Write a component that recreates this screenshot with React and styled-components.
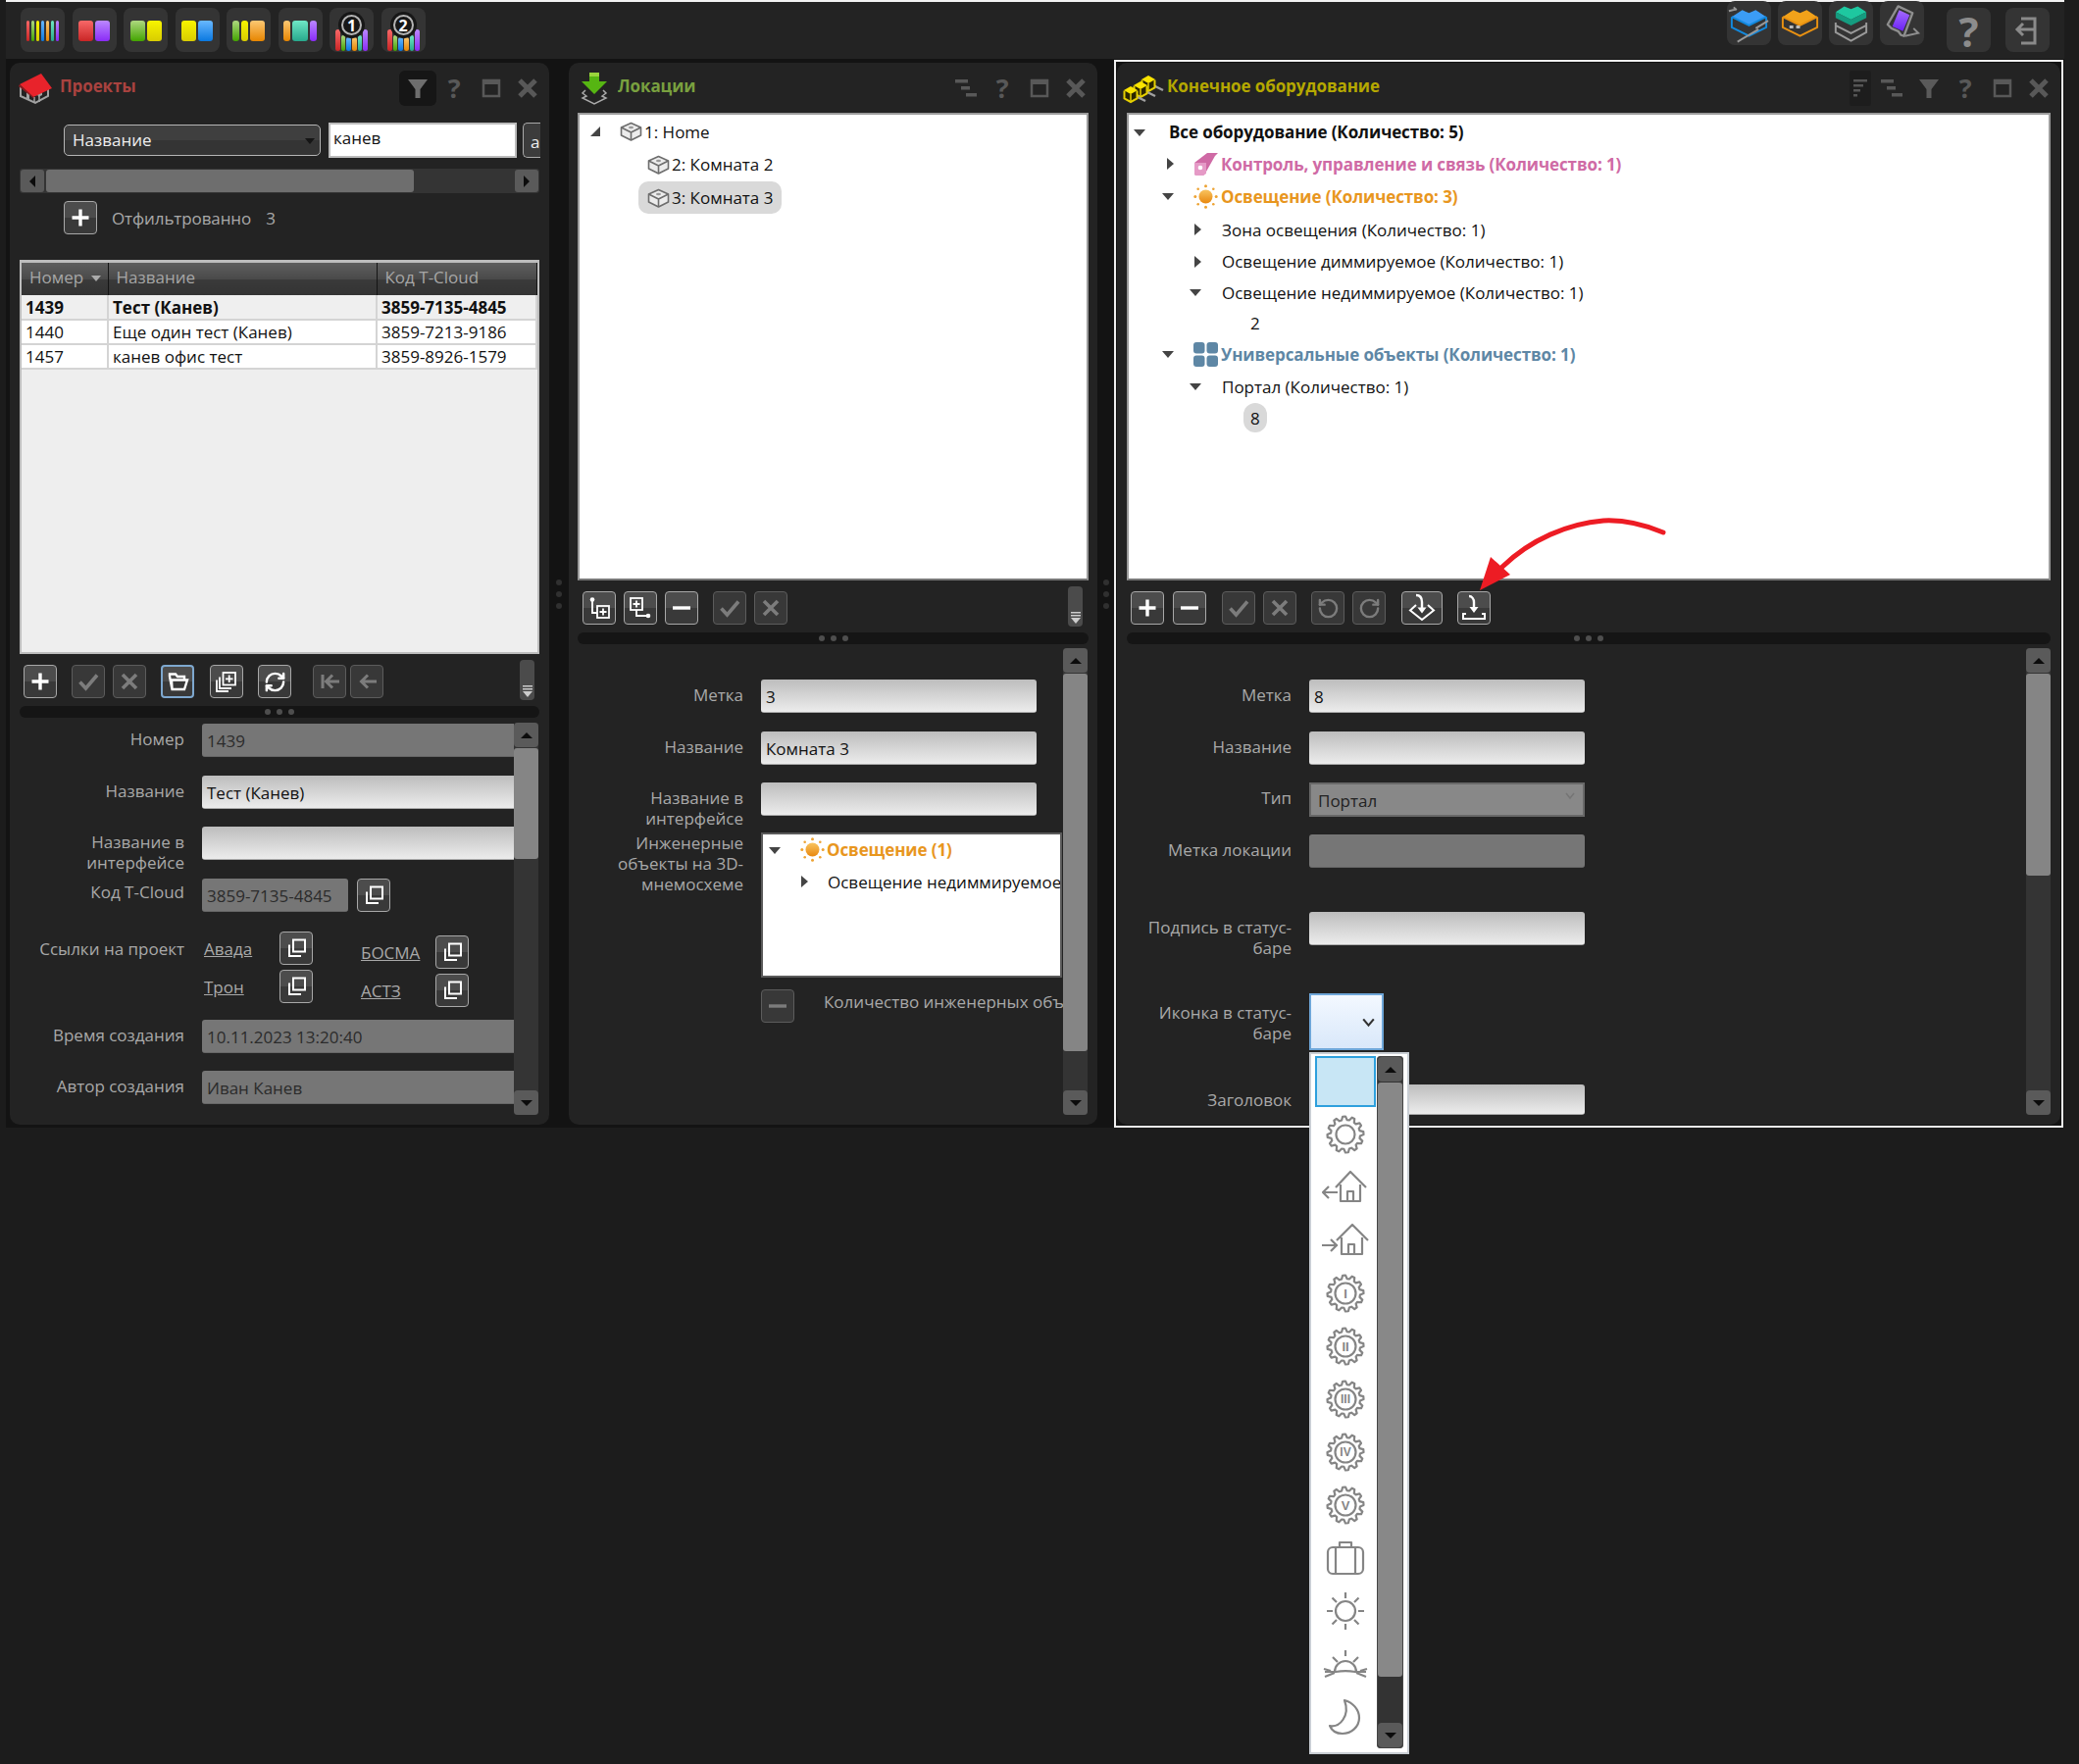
import React from 'react';
import styled, { createGlobalStyle } from 'styled-components';
import { RefreshCw, RotateCcw, RotateCw } from 'lucide-react';

const Global = createGlobalStyle`
  html, body { margin: 0; padding: 0; background: #1c1c1c; }
  body { font-family: "Open Sans", "Noto Sans", sans-serif; font-size: 17px; }
  * { box-sizing: border-box; }
`;

const Page = styled.div`
  width: 2120px; height: 1799px; background: #1c1c1c; overflow: hidden;
`;
const TopBar = styled.div`
  width: 2099px; height: 60px; margin-left: 6px; background: #232323;
  border-top: 2px solid #f2f2f2; display: flex; align-items: flex-start; position: relative;
`;
const LeftTools = styled.div`
  display: flex; gap: 7.5px; margin: 6px 0 0 15px;
`;
const RightTools = styled.div`
  display: flex; margin-left: auto; margin-right: 15px; margin-top: -1px; gap: 7px;
`;
const ToolTile = styled.div`
  width: 45px; height: 45px; border-radius: 8px; background: #343434; position: relative;
  display: flex; align-items: center; justify-content: center; gap: 2px;
  padding-top: 1px;
`;
const RightTile = styled(ToolTile)`
  margin-left: ${p => p.$ml || 0}px; margin-top: ${p => p.$mt || 0}px;
  color: #8c8c8c; font-weight: 700; font-size: 42px; line-height: 45px;
`;
const SwatchBar = styled.div`
  width: ${p => p.$w}px; height: ${p => p.$h || 21}px; border-radius: 3px;
  background: linear-gradient(${p => p.$a}, ${p => p.$b});
  align-self: ${p => (p.$h ? 'flex-end' : 'center')};
`;
const ArchBars = styled.div`
  height: 34px; display: flex; gap: 1px; align-items: flex-end; margin-top: 8px;
`;
const NumBadge = styled.div`
  position: absolute; left: 9px; top: 4px; width: 27px; height: 27px; border-radius: 50%;
  background: #171717; display: flex; align-items: center; justify-content: center;
  &::after {
    content: ''; position: absolute; inset: 3px; border: 2px solid #b5b5b5; border-radius: 50%;
  }
  font-size: 16px; font-weight: 700; color: #fff; line-height: 1;
`;

const Workspace = styled.div`
  width: 2099px; height: 1090px; margin-left: 6px; background: #131313;
  display: flex; align-items: flex-start; padding: 4px 0 0 4px;
`;
const Gutter = styled.div`
  width: ${p => p.$w}px; height: 1083px; display: flex; flex-direction: column;
  align-items: center; justify-content: center; gap: 6px;
`;
const GutterDot = styled.span`
  width: 6px; height: 6px; border-radius: 50%; background: #303030;
`;
const Panel = styled.div`
  position: relative; width: ${p => p.$w}px; height: 1083px; background: #232323;
  border-radius: 10px; display: flex; flex-direction: column; padding: 0 ${p => p.$px || 10}px 10px;
`;
const PanelFrame = styled.div`
  border: 2px solid #f0f0f0; padding: 1px; margin-top: -3px; position: relative;
`;
const PanelHeader = styled.div`
  height: 51px; flex: none; display: flex; align-items: center;
  margin: 0 ${p => -(p.$px || 10) + 3}px 0 ${p => p.$ml || 0}px;
`;
const Title = styled.div`
  font-weight: 700; font-size: 17px; letter-spacing: -0.1px; color: ${p => p.$c}; margin-left: ${p => p.$gap}px; margin-bottom: 4px;
`;
const HeaderIcons = styled.div`
  margin-left: auto; display: flex; height: 36px; align-self: center;
`;
const HeaderSlot = styled.div`
  width: 37.5px; height: 36px; display: flex; align-items: center; justify-content: center;
  color: #585858; font-size: 27px; font-weight: 700; line-height: 1;
  background: ${p => (p.$active ? '#161616' : 'transparent')}; border-radius: 6px;
`;
const ListBox = styled.div`
  width: 22px; height: 36px; margin-left: 11px; background: #1d1d1d; border-radius: 3px;
  display: flex; align-items: center; justify-content: center;
`;

const FilterRow = styled.div`
  display: flex; align-items: center; margin: 10px 0 0 45px; height: 36px; gap: 8px; overflow: hidden; width: 486px;
`;
const DarkSelect = styled.div`
  width: 262px; height: 32px; border: 1.5px solid #b5b5b5; border-radius: 5px;
  background: linear-gradient(#3f3f3f 50%, #343434 50%); color: #eee; padding: 0 0 2px 8px;
  display: flex; align-items: center; justify-content: space-between; line-height: 1;
  &::after {
    content: ''; border: 5px solid transparent; border-top: 6px solid #151515; border-bottom: 0; margin-right: 5px; margin-top: 3px;
  }
`;
const SearchInput = styled.div`
  width: 192px; height: 36px; background: #fff; border: 2px solid #bcbcbc; color: #111;
  padding: 1px 0 0 3px; line-height: 26px;
`;
const CutButton = styled.div`
  width: 18px; height: 36px; flex: none; border: 1.5px solid #a9a9a9; border-right: 0; border-radius: 5px 0 0 5px;
  margin-left: -2px; background: #3c3c3c; color: #eee; padding: 6px 0 0 7px; line-height: 26px; overflow: hidden;
`;
const HScroll = styled.div`
  margin-top: 11px; height: 25px; width: 530px; display: flex; background: #343434; border-radius: 3px; padding: 1px;
`;
const HBtn = styled.div`
  width: 24px; height: 23px; flex: none; background: #5a5a5a; border-radius: 3px; display: flex; align-items: center; justify-content: center;
  &::after {
    content: ''; border: 6px solid transparent;
    ${p => (p.$dir === 'l' ? 'border-right: 6px solid #0c0c0c; border-left: 0;' : 'border-left: 6px solid #0c0c0c; border-right: 0;')}
  }
`;
const HThumb = styled.div`
  width: 375px; height: 23px; margin-left: 2px; background: #6e6e6e; border-radius: 3px;
`;
const HSpace = styled.div`flex: 1;`;
const AddRow = styled.div`
  margin: 8px 0 0 45px; height: 34px; display: flex; align-items: center; color: #a9a9a9; font-size: 17px; letter-spacing: -0.1px;
`;
const AddText = styled.span`margin-left: ${p => p.$ml}px; margin-top: 1px;`;

const TableBox = styled.div`
  margin-top: 26px; height: 402px; width: 530px; border: 2px solid #bdbdbd; border-top-width: 3px; background: #eee; flex: none;
`;
const Grid = styled.table`
  border-collapse: collapse; table-layout: fixed; width: 100%; font-size: 17px; color: #111;
`;
const Th = styled.th`
  width: ${p => p.$w}px; height: 33px; padding: 0 0 5px 8px; font-weight: 400; text-align: left; color: #a6a6a6;
  background: linear-gradient(#5e5e5e, #4a4a4a 50%, #3a3a3a 52%, #333);
  border-right: 1px solid #151515; line-height: 1;
`;
const SortMark = styled.span`
  display: inline-block; margin-left: 8px; vertical-align: 2px;
  border: 5px solid transparent; border-top: 6px solid #aaa; border-bottom: 0;
`;
const Td = styled.td`
  height: 25px; padding: 0 0 0 4px; line-height: 1; background: ${p => (p.$sel ? '#efefef' : '#fff')};
  font-weight: ${p => (p.$sel ? 700 : 400)};
  border-right: 2px solid #d4d4d4; border-bottom: 2px solid #d4d4d4; white-space: nowrap;
`;

const TreeBox = styled.div`
  height: 477px; flex: none; background: #fff; border: 2px solid #9c9c9c; border-bottom-color: #777; padding-top: 1px; color: #111; font-size: 17px;
`;
const TreeRow = styled.div`
  height: ${p => p.$h || 32}px; display: flex; align-items: center; padding-left: ${p => p.$pl}px; white-space: nowrap;
`;
const Caret = styled.svg`
  width: 12px; height: 12px; flex: none; margin-right: ${p => p.$mr}px; fill: #444;
`;
const NodeText = styled.span`
  color: ${p => p.$c || '#111'}; font-weight: ${p => (p.$bold ? 700 : 400)}; line-height: 1;
  letter-spacing: ${p => (p.$bold ? '-0.1px' : '0')}; margin-left: ${p => p.$ml || 0}px;
`;
const Pill = styled.span`
  background: #d9d9d9; border-radius: ${p => p.$r}px; display: inline-flex; align-items: center;
  height: ${p => p.$hh}px; padding: 0 ${p => p.$px}px; margin-left: ${p => p.$ml || 0}px;
`;

const Toolbar = styled.div`
  height: 41px; flex: none; margin-top: 6px; display: flex; align-items: flex-start; padding: 5px ${p => p.$pr || 5}px 0 ${p => p.$pl}px;
`;
const ToolBtn = styled.div`
  width: ${p => p.$w || 34}px; height: 34px; flex: none; margin-left: ${p => p.$ml || 0}px; border-radius: 4px;
  border: ${p => (p.$on ? '2px' : '1.5px')} solid ${p => (p.$off ? '#5c5c5c' : p.$on ? '#7ea8cf' : '#a8a8a8')};
  background: ${p => (p.$off ? '#383838' : 'linear-gradient(#4c4c4c 50%, #393939 50%)')};
  color: ${p => (p.$off ? '#7c7c7c' : '#fff')};
  display: flex; align-items: center; justify-content: center;
`;
const Handle = styled.div`
  width: 15px; height: 41px; margin-left: auto; margin-top: -5px; border-radius: 4px; background: #4b4b4b;
  display: flex; align-items: flex-end; justify-content: center; padding-bottom: 2px;
`;
const HSplit = styled.div`
  height: 12px; flex: none; margin-top: 6px; background: #151515; border-radius: 6px;
  display: flex; align-items: center; justify-content: center; gap: 6px;
`;
const SplitDot = styled.span`
  width: 6px; height: 6px; border-radius: 50%; background: #4e4e4e;
`;
const FormArea = styled.div`
  flex: 1; min-height: 0; margin-top: ${p => p.$mt}px; margin-right: ${p => p.$mr || 0}px; display: flex;
`;
const FormBody = styled.div`
  flex: 1; min-width: 0; overflow: hidden; padding-top: ${p => p.$pt}px; padding-left: ${p => p.$pl || 0}px;
`;
const Row = styled.div`
  height: ${p => p.$h || 52.5}px; display: grid; grid-template-columns: 168px 1fr; column-gap: 18px; align-items: start;
`;
const Label = styled.div`
  text-align: right; color: #a9a9a9; font-size: 17px; line-height: 21px; padding-top: ${p => p.$pt ?? 5}px;
`;
const Field = styled.div`
  width: ${p => p.$w}px; height: ${p => p.$h || 34}px; border-radius: 3px; padding-left: 5px; line-height: 35px; font-size: 17px;
  color: ${p => (p.$off ? '#2b2b2b' : '#111')};
  background: ${p => (p.$off ? '#767676' : 'linear-gradient(#bdbdbd, #ececec)')};
  border-bottom: 1px solid ${p => (p.$off ? '#666' : '#aaa')};
`;
const FieldLine = styled.div`display: flex; gap: 9px;`;
const LinksGrid = styled.div`
  display: grid; grid-template-columns: 160px 112px; position: relative; padding-left: 2px;
`;
const LinkCol = styled.div`
  margin-top: ${p => p.$mt || 0}px; display: flex; flex-direction: column; gap: 5px;
`;
const LinkRow = styled.div`
  display: flex; justify-content: space-between; align-items: flex-start; width: ${p => p.$w}px;
`;
const ProjectLink = styled.a`
  color: #a9a9a9; text-decoration: underline; font-size: 17px; line-height: 36px; height: 34px;
`;
const VScroll = styled.div`
  width: 25px; flex: none; background: #343434; display: flex; flex-direction: column; border-radius: 3px;
`;
const VBtn = styled.div`
  height: 25px; flex: none; background: #5a5a5a; border-radius: 4px; display: flex; align-items: center; justify-content: center;
  &::after {
    content: ''; border: 6px solid transparent;
    ${p => (p.$dir === 'u' ? 'border-bottom: 6px solid #0c0c0c; border-top: 0;' : 'border-top: 6px solid #0c0c0c; border-bottom: 0;')}
  }
`;
const VThumb = styled.div`
  height: ${p => p.$h}px; flex: none; background: #858585; border-radius: 3px; margin-top: 1px;
`;
const VSpace = styled.div`flex: 1;`;
const SubTree = styled.div`
  width: 307px; height: 148px; background: #fff; border: 2px solid #5a5a5a; overflow: hidden; font-size: 17px;
`;
const SubTreeRow = styled(TreeRow)`
  height: ${p => p.$h}px;
`;
const CountRow = styled.div`
  display: flex; align-items: flex-start; white-space: nowrap;
`;
const CountText = styled.span`
  color: #a9a9a9; margin-left: 30px; margin-top: 1px; line-height: 24px;
`;
const TypeSelect = styled.div`
  width: 281px; height: 35px; background: #888; border: 2px solid #686868; color: #222; padding-left: 7px; line-height: 33px;
  display: flex; justify-content: space-between;
`;
const TinyChevron = styled.svg`
  width: 12px; height: 12px; margin: 6px 7px 0 0; stroke: #757575; fill: none; stroke-width: 1.5;
`;
const IconSelect = styled.div`
  width: 76px; height: 58px; background: linear-gradient(#f3f8ff, #d9e8fa); border: 2px solid #6ea6d8;
  display: flex; align-items: center; justify-content: flex-end; padding-right: 5px; position: relative;
`;
const DarkChevron = styled.svg`
  width: 17px; height: 17px; stroke: #333; fill: none; stroke-width: 2;
`;
const Dropdown = styled.div`
  position: absolute; left: 196px; top: 1009px; width: 102px; height: 716px; z-index: 5;
  background: #fff; border: 2px solid #c9ced4; padding: 2px 4px; display: flex; gap: 1px;
`;
const DropList = styled.div`
  width: 62px; flex: none; display: flex; flex-direction: column; align-items: center;
`;
const DropSelected = styled.div`
  width: 62px; height: 52px; flex: none; margin-bottom: 1px; background: #c8e6f5; border: 2px solid #2ea0dd;
`;
const DropItem = styled.div`
  height: 54px; flex: none; width: 62px; display: flex; align-items: center; justify-content: center;
`;
const DropScroll = styled.div`
  width: 27px; height: 706px; flex: none; background: #333; border: 1px solid #444; border-radius: 3px; display: flex; flex-direction: column;
`;
const DropBtn = styled(VBtn)`height: 25px;`;
const DropThumb = styled(VThumb)`
  height: 606px; background: #888; margin-top: 1px;
`;
const ArrowMark = styled.svg`
  position: absolute; left: 360px; top: 404px; width: 200px; height: 145px; z-index: 4; pointer-events: none;
`;

/* ---------- drawn icons ---------- */
const I = ({ size = 24, sw = 2, children, vb = '0 0 24 24' }) => (
  <svg width={size} height={size} viewBox={vb} fill="none" stroke="currentColor" strokeWidth={sw} strokeLinecap="butt" strokeLinejoin="miter">{children}</svg>
);
const PlusI = () => <I sw={3.4}><path d="M12 3.5v17M3.5 12h17" /></I>;
const MinusI = () => <I sw={3.4}><path d="M3 12h18" /></I>;
const CheckI = () => <I sw={3.6}><path d="M3.5 12.5l6 6.5L21 5.5" /></I>;
const CrossI = () => <I sw={3.6}><path d="M5 5l14 14M19 5L5 19" /></I>;
const FolderI = () => <I sw={2.4}><path d="M4 7V4.5h6l2 2.500h7v3.500M4 7l2.500 13H19l3-9.500H6L6.500 20" /></I>;
const CopyPlusI = () => <I sw={1.8}><rect x="8.5" y="3" width="12.5" height="12.5" /><path d="M14.700 5.500v7.500M11 9.300h7.500M5 7.500V19h12M2 10.500V22h12" /></I>;
const FirstI = () => <I sw={3}><path d="M5 5v14M22 12H9M15 5.500l-6.500 6.500 6.500 6.500" /></I>;
const BackI = () => <I sw={3}><path d="M22 12H7M13 5.500L6.500 12l6.500 6.500" /></I>;
const CopyI = () => <I sw={2}><rect x="9" y="3.5" width="12" height="12" /><path d="M5 8.500V20h12" /></I>;
const TreeChildI = () => (
  <I sw={1.8}><circle cx="5" cy="3.5" r="2.3" fill="currentColor" stroke="none" /><path d="M5 4v13h5" /><rect x="10" y="10" width="12" height="12" /><path d="M16 12.500v7M12.500 16h7" /></I>
);
const TreeSiblingI = () => (
  <I sw={1.8}><rect x="2" y="2" width="12" height="12" /><path d="M8 4.500v7M4.500 8h7M8 14v6h10" /><circle cx="20" cy="20" r="2.3" fill="currentColor" stroke="none" /></I>
);
const DropDiamondI = () => (
  <I size={30} vb="0 0 30 30" sw={2}><path d="M9 2c4 0 6 3 6 7v9" strokeWidth="2.4" /><path d="M10.500 14.500h9L15 20.500z" fill="currentColor" stroke="none" /><path d="M9 12L3 17.500 15 27l12-9.500L21 12" /></I>
);
const DropTrayI = () => (
  <I size={28} vb="0 0 28 28" sw={2}><path d="M9 2c3 0 5 3 5 6v8" strokeWidth="2.4" /><path d="M9.500 13h9L14 19z" fill="currentColor" stroke="none" /><path d="M6 20H3v5h22v-5h-3" /></I>
);
const HandleMark = () => (
  <svg width="12" height="13" viewBox="0 0 12 13" fill="#ccc"><rect x="1" y="0" width="10" height="1.5" /><rect x="1" y="3" width="10" height="1.5" /><path d="M1 6h10l-5 6z" /></svg>
);
const FunnelI = ({ c = '#5a5a5a' }) => <svg width="24" height="24" viewBox="0 0 24 24" fill={c}><path d="M2 3h20l-7.500 10v9h-5v-9z" /></svg>;
const MaxI = () => <svg width="20" height="20" viewBox="0 0 20 20" fill="none" stroke="#585858" strokeWidth="2.5"><path d="M2 2h16v16H2z" /><path d="M2 4h16" strokeWidth="4" /></svg>;
const CloseI = () => <svg width="22" height="22" viewBox="0 0 22 22" stroke="#585858" strokeWidth="5"><path d="M3 3l16 16M19 3L3 19" /></svg>;
const StepsI = () => <svg width="24" height="20" viewBox="0 0 24 20" fill="#585858"><rect x="1" y="1" width="13" height="3.5" /><rect x="7" y="8" width="9" height="3.5" /><rect x="12" y="15" width="11" height="3.5" /></svg>;
const ListI = () => <svg width="18" height="22" viewBox="0 0 18 22" fill="#555"><rect x="2" y="2" width="14" height="2.5" /><rect x="2" y="7" width="10" height="2.5" /><rect x="2" y="12" width="7" height="2.5" /><rect x="2" y="17" width="4" height="2.5" /></svg>;

const HouseLogo = () => (
  <svg width="48" height="42" viewBox="0 0 48 42">
    <path d="M8 20v9l15 7 13-7v-7" fill="none" stroke="#a2a2a2" strokeWidth="2" />
    <path d="M14 25v6l3 1.500v-6zM17.500 23v4M26 26l4-2v4l-4 2z" fill="#a2a2a2" />
    <path d="M22 30v6M23 27l4 1v7" fill="none" stroke="#a2a2a2" strokeWidth="1.5" />
    <path d="M7 17L29 6l11 15-19 9z" fill="#e8232b" />
    <path d="M7 17l14 13 1 2L6 19z" fill="#8c1c20" />
  </svg>
);
const LocLogo = () => (
  <svg width="28" height="34" viewBox="0 0 28 34">
    <path d="M9 1h10v9h8L14 23 1 10h8z" fill="#56b512" />
    <path d="M9 1h10v4H9z" fill="#9ad43c" />
    <path d="M5 19l-3 3 4 3-4 2 12 6 12-6-4-2 4-3-3-3" fill="none" stroke="#aaa" strokeWidth="1.5" />
  </svg>
);
const EquipCube = ({ x, y }) => (
  <g transform={`translate(${x} ${y})`}>
    <path d="M12 10l10 5" stroke="#a0a0a0" strokeWidth="2.5" />
    <path d="M0.500 4.500v8l6.500 3.500 6.500-3.500v-8" fill="#2b2600" stroke="#e6cf00" strokeWidth="2" />
    <path d="M7 0l7 4-7 4-7-4z" fill="#fbe400" />
    <path d="M7 8v8" stroke="#e6cf00" strokeWidth="1.5" />
  </g>
);
const EquipLogo = () => (
  <svg width="48" height="38" viewBox="0 0 48 38">
    <EquipCube x={22} y={6} />
    <EquipCube x={14} y={12} />
    <EquipCube x={4} y={17} />
  </svg>
);
const CubeI = () => (
  <svg width="23" height="20" viewBox="0 0 23 20" fill="none" stroke="#6d6d6d" strokeWidth="1.6" strokeLinejoin="round">
    <path d="M11.500 1.500L21.500 6v8l-10 5-10-5V6z" fill="#ececec" />
    <path d="M1.500 6l10 5 10-5M11.500 11v8" />
    <ellipse cx="11.5" cy="6" rx="2.5" ry="1.2" fill="#999" stroke="none" />
  </svg>
);
const SunI = ({ size = 25 }) => (
  <svg width={size} height={size} viewBox="0 0 25 25">
    <defs><linearGradient id="sunG" x1="0" y1="0" x2="0" y2="1"><stop offset="0" stopColor="#f9c460" /><stop offset="1" stopColor="#e8870e" /></linearGradient></defs>
    <circle cx="12.5" cy="12.5" r="7" fill="url(#sunG)" />
    <g fill="#eda334">
      <circle cx="12.5" cy="1.8" r="1.5" /><circle cx="12.5" cy="23.2" r="1.5" /><circle cx="1.8" cy="12.5" r="1.5" /><circle cx="23.2" cy="12.5" r="1.5" />
      <circle cx="4.7" cy="4.7" r="1.3" /><circle cx="20.3" cy="4.7" r="1.3" /><circle cx="4.7" cy="20.3" r="1.3" /><circle cx="20.3" cy="20.3" r="1.3" />
    </g>
  </svg>
);
const ControlI = () => (
  <svg width="25" height="24" viewBox="0 0 25 24"><path d="M1 11L14 1h11l-3 3-9 16-3 4H2l-1-2z" fill="#cf6aa5" /><path d="M1 11h12v11l-3 2H2l-1-2z" fill="#e59ac6" /><circle cx="7" cy="16" r="2.3" fill="#fff" /></svg>
);
const UniversalI = () => (
  <svg width="25" height="25" viewBox="0 0 25 25" fill="#5e87a5"><rect x="0" y="0" width="11.5" height="11.5" rx="3" /><rect x="13.5" y="0" width="11.5" height="11.5" rx="3" /><rect x="0" y="13.5" width="11.5" height="11.5" rx="3" /><rect x="13.5" y="13.5" width="11.5" height="11.5" rx="3" /></svg>
);
const CaretSvg = ({ kind, mr }) => (
  <Caret viewBox="0 0 12 12" $mr={mr}>
    {kind === 'down' && <path d="M0 3h12L6 10z" />}
    {kind === 'right' && <path d="M3 0l7 6-7 6z" />}
    {kind === 'corner' && <path d="M11 1v10H1z" />}
  </Caret>
);

const gearPoints = (rOut, rIn, n) => {
  const pts = [];
  for (let i = 0; i < n; i++) {
    const s = (i / n) * Math.PI * 2;
    const w = (Math.PI * 2) / n;
    [[rIn, -0.5], [rOut, -0.3], [rOut, 0], [rIn, 0.2]].forEach(([r, k]) => {
      pts.push(`${(20 + r * Math.cos(s + k * w)).toFixed(2)},${(20 + r * Math.sin(s + k * w)).toFixed(2)}`);
    });
  }
  return pts.join(' ');
};
const GEAR = gearPoints(18.5, 15, 12);
const GrayIcon = ({ w = 40, h = 40, children }) => (
  <svg width={w} height={h} viewBox={`0 0 ${w} ${h}`} fill="none" stroke="#858585" strokeWidth="2.2" strokeLinejoin="round">{children}</svg>
);
const GearText = styled.text`
  font-family: "Liberation Sans", sans-serif; font-size: ${p => p.$s}px; font-weight: 700; fill: #858585; stroke: none; text-anchor: middle;
`;
const Gear = ({ r = 10.5, label, s = 13 }) => (
  <GrayIcon>
    <polygon points={GEAR} />
    <circle cx="20" cy="20" r={r} />
    {label && <GearText x="20" y={20 + s * 0.36} $s={s}>{label}</GearText>}
  </GrayIcon>
);
const HomeOut = () => (
  <GrayIcon w={50} h={36}>
    <path d="M15 18L30 2l16 16M20 15v17h20V15M27 32V22h6v10M2 23h15M8 17l-6 6 6 6" />
  </GrayIcon>
);
const HomeIn = () => (
  <GrayIcon w={50} h={36}>
    <path d="M16 18L32 2l16 16M21 15v17h21V15M28 32V22h6v10M1 23h16M10 17l6 6-6 6" />
  </GrayIcon>
);
const Case = () => (
  <GrayIcon>
    <rect x="2" y="9" width="36" height="27" rx="5" /><path d="M10 9v27M30 9v27M14 9V4h12v5" />
  </GrayIcon>
);
const Sun = () => (
  <GrayIcon>
    <circle cx="20" cy="20" r="10" />
    <path d="M20 1v6M20 33v6M1 20h6M33 20h6M6.500 6.500l4.500 4.500M29 29l4.500 4.500M33.500 6.500L29 11M11 29l-4.500 4.500" />
  </GrayIcon>
);
const Sunrise = () => (
  <GrayIcon w={46} h={30}>
    <path d="M12 23a11 11 0 0 1 22 0M23 1v6M2 23l11 0c6-1 14-1 20 0l11 0M2 28l10-4M44 28l-10-4M10 8l5 5M36 8l-5 5M1 20l7 2M45 20l-7 2" />
  </GrayIcon>
);
const Moon = () => (
  <GrayIcon>
    <path d="M19 3c8 2 15 9 15 18 0 9-8 16-17 16-6 0-11-3-13-8 10 2 21-10 15-26z" />
  </GrayIcon>
);

const IsoBox = ({ top, line, children }) => (
  <svg width="46" height="46" viewBox="0 0 46 46" fill="none">
    <path d="M5 16l11-7 7 3 7-3 11 7-18 9z" fill={top} />
    <path d="M5 16v11l18 9 18-9V16M5 16l18 9 18-9" stroke={line} strokeWidth="2" strokeLinejoin="round" />
    {children}
  </svg>
);
const TabletI = () => (
  <svg width="46" height="46" viewBox="0 0 46 46" fill="none">
    <defs><linearGradient id="pG" x1="0" y1="0" x2="0" y2="1"><stop offset="0" stopColor="#a46bff" /><stop offset="1" stopColor="#6b22f5" /></linearGradient></defs>
    <path d="M19 5l15 7-9 24-3-1-3-4-7-3-4-4z" stroke="#8e8e8e" strokeWidth="2.4" strokeLinejoin="round" />
    <path d="M20 9l11 5-7 17-11-5z" fill="url(#pG)" />
    <path d="M26 36l14-3-5-5" stroke="#8e8e8e" strokeWidth="2" />
  </svg>
);
const ExitI = () => (
  <svg width="30" height="30" viewBox="0 0 30 30" fill="none" stroke="#8a8a8a" strokeWidth="3"><path d="M8 3h14v25H8" /><path d="M21 14H4M10 8l-6 6 6 6" /></svg>
);

/* ---------- shared pieces ---------- */
const C = { r: ['#f86868', '#c92525'], p: ['#bb88ff', '#8a2bf6'], g: ['#aed87f', '#43a400'], y: ['#f8f400', '#d8cc00'], b: ['#68b8ff', '#0a78e0'], o: ['#fcc873', '#e78500'], t: ['#6fe8c6', '#27a88c'] };
const Bar = ({ c, w, h }) => <SwatchBar $w={w} $h={h} $a={C[c][0]} $b={C[c][1]} />;
const Hdr = ({ list, steps, filter }) => (
  <HeaderIcons>
    {list && <HeaderSlot><ListBox><ListI /></ListBox></HeaderSlot>}
    {steps && <HeaderSlot><StepsI /></HeaderSlot>}
    {filter && <HeaderSlot $active={filter === 'on'}><FunnelI c={filter === 'on' ? '#6e6e6e' : '#5a5a5a'} /></HeaderSlot>}
    <HeaderSlot>?</HeaderSlot>
    <HeaderSlot><MaxI /></HeaderSlot>
    <HeaderSlot><CloseI /></HeaderSlot>
  </HeaderIcons>
);
const Split = () => (<HSplit><SplitDot /><SplitDot /><SplitDot /></HSplit>);
const VBar = ({ thumb }) => (
  <VScroll><VBtn $dir="u" /><VThumb $h={thumb} /><VSpace /><VBtn $dir="d" /></VScroll>
);
const Dots = ({ w }) => (<Gutter $w={w}><GutterDot /><GutterDot /><GutterDot /></Gutter>);

const rowsData = [
  ['1439', 'Тест (Канев)', '3859-7135-4845', true],
  ['1440', 'Еще один тест (Канев)', '3859-7213-9186'],
  ['1457', 'канев офис тест', '3859-8926-1579'],
];

export default function App() {
  return (
    <Page>
      <Global />
      <TopBar>
        <LeftTools>
          <ToolTile>{['r', 'g', 'y', 'b', 'o', 't', 'p'].map(c => <Bar key={c} c={c} w={3} />)}</ToolTile>
          <ToolTile><Bar c="r" w={15} /><Bar c="p" w={15} /></ToolTile>
          <ToolTile><Bar c="g" w={15} /><Bar c="y" w={15} /></ToolTile>
          <ToolTile><Bar c="y" w={15} /><Bar c="b" w={15} /></ToolTile>
          <ToolTile><Bar c="g" w={7} /><Bar c="y" w={7} /><Bar c="o" w={15} /></ToolTile>
          <ToolTile><Bar c="o" w={7} /><Bar c="t" w={16} /><Bar c="p" w={7} /></ToolTile>
          {['1', '2'].map(n => (
            <ToolTile key={n}>
              <ArchBars>
                <Bar c="r" w={5} h={22} /><Bar c="g" w={4} h={16} /><Bar c="b" w={5} h={14} /><Bar c="o" w={5} h={14} /><Bar c="t" w={4} h={16} /><Bar c="p" w={5} h={22} />
              </ArchBars>
              <NumBadge>{n}</NumBadge>
            </ToolTile>
          ))}
        </LeftTools>
        <RightTools>
          <RightTile>
            <IsoBox top="#3b9cf5" line="#1289dd"><path d="M2 10l8-2M7 6l3 3M30 28l13-8M11 42l22-13" stroke="#999" strokeWidth="2" /></IsoBox>
          </RightTile>
          <RightTile><IsoBox top="#f2a21a" line="#e89112"><path d="M12 25h4v3h-4zM19 25h4v3h-4z" fill="#bbb" /></IsoBox></RightTile>
          <RightTile>
            <svg width="46" height="46" viewBox="0 0 46 46" fill="none">
              <path d="M7 11l9-6 7 3 7-3 9 6-16 8z" fill="#1ec8a0" /><path d="M7 11v6l16 8 16-8v-6L23 19z" fill="#159c80" />
              <path d="M7 22v10l16 9 16-9V22M7 25l16 8 16-8" stroke="#9a9a9a" strokeWidth="2" />
            </svg>
          </RightTile>
          <RightTile><TabletI /></RightTile>
          <RightTile $ml={16} $mt={7}>?</RightTile>
          <RightTile $ml={8} $mt={7}><ExitI /></RightTile>
        </RightTools>
      </TopBar>

      <Workspace>
        <Panel $w={550}>
          <PanelHeader $ml={-7}>
            <HouseLogo />
            <Title $c="#a9423f" $gap={0}>Проекты</Title>
            <Hdr filter="on" />
          </PanelHeader>
          <FilterRow>
            <DarkSelect>Название</DarkSelect>
            <SearchInput>канев</SearchInput>
            <CutButton>а</CutButton>
          </FilterRow>
          <HScroll>
            <HBtn $dir="l" /><HThumb /><HSpace /><HBtn $dir="r" />
          </HScroll>
          <AddRow>
            <ToolBtn><PlusI /></ToolBtn>
            <AddText $ml={15}>Отфильтрованно</AddText>
            <AddText $ml={15}>3</AddText>
          </AddRow>
          <TableBox>
            <Grid>
              <thead>
                <tr>
                  <Th $w={88}>Номер<SortMark /></Th>
                  <Th $w={274}>Название</Th>
                  <Th>Код T-Cloud</Th>
                </tr>
              </thead>
              <tbody>
                {rowsData.map(([a, b, c, s]) => (
                  <tr key={a}><Td $sel={s}>{a}</Td><Td $sel={s}>{b}</Td><Td $sel={s}>{c}</Td></tr>
                ))}
              </tbody>
            </Grid>
          </TableBox>
          <Toolbar $pl={4}>
            <ToolBtn><PlusI /></ToolBtn>
            <ToolBtn $off $ml={15}><CheckI /></ToolBtn>
            <ToolBtn $off $ml={8}><CrossI /></ToolBtn>
            <ToolBtn $on $ml={15}><FolderI /></ToolBtn>
            <ToolBtn $ml={16}><CopyPlusI /></ToolBtn>
            <ToolBtn $ml={15}><RefreshCw size={23} strokeWidth={2.6} /></ToolBtn>
            <ToolBtn $off $ml={22}><FirstI /></ToolBtn>
            <ToolBtn $off $ml={4}><BackI /></ToolBtn>
            <Handle><HandleMark /></Handle>
          </Toolbar>
          <Split />
          <FormArea $mt={5} $mr={1}>
            <FormBody $pt={1}>
              <Row><Label>Номер</Label><Field $off $w={340}>1439</Field></Row>
              <Row><Label>Название</Label><Field $w={340}>Тест (Канев)</Field></Row>
              <Row><Label>Название в интерфейсе</Label><Field $w={340} /></Row>
              <Row $h={54}>
                <Label $pt={3}>Код T-Cloud</Label>
                <FieldLine><Field $off $w={149}>3859-7135-4845</Field><ToolBtn><CopyI /></ToolBtn></FieldLine>
              </Row>
              <Row $h={90}>
                <Label $pt={7}>Ссылки на проект</Label>
                <LinksGrid>
                  <LinkCol>
                    <LinkRow $w={111}><ProjectLink>Авада</ProjectLink><ToolBtn><CopyI /></ToolBtn></LinkRow>
                    <LinkRow $w={111}><ProjectLink>Трон</ProjectLink><ToolBtn><CopyI /></ToolBtn></LinkRow>
                  </LinkCol>
                  <LinkCol $mt={4}>
                    <LinkRow $w={110}><ProjectLink>БОСМА</ProjectLink><ToolBtn><CopyI /></ToolBtn></LinkRow>
                    <LinkRow $w={110}><ProjectLink>АСТЗ</ProjectLink><ToolBtn><CopyI /></ToolBtn></LinkRow>
                  </LinkCol>
                </LinksGrid>
              </Row>
              <Row><Label>Время создания</Label><Field $off $w={340}>10.11.2023 13:20:40</Field></Row>
              <Row><Label>Автор создания</Label><Field $off $w={340}>Иван Канев</Field></Row>
            </FormBody>
            <VBar thumb={113} />
          </FormArea>
        </Panel>

        <Dots w={20} />

        <Panel $w={539} $px={9}>
          <PanelHeader $px={9} $ml={3}>
            <LocLogo />
            <Title $c="#79a03f" $gap={10}>Локации</Title>
            <Hdr steps />
          </PanelHeader>
          <TreeBox>
            <TreeRow $h={32} $pl={10}>
              <CaretSvg kind="corner" mr={19} />
              <CubeI />
              <NodeText $ml={2}>1: Home</NodeText>
            </TreeRow>
            <TreeRow $h={35} $pl={69}><CubeI /><NodeText $ml={2}>2: Комната 2</NodeText></TreeRow>
            <TreeRow $h={33} $pl={60}>
              <Pill $r={10} $hh={33} $px={9}><CubeI /><NodeText $ml={2}>3: Комната 3</NodeText></Pill>
            </TreeRow>
          </TreeBox>
          <Toolbar $pl={5} $pr={6}>
            <ToolBtn><TreeChildI /></ToolBtn>
            <ToolBtn $ml={8}><TreeSiblingI /></ToolBtn>
            <ToolBtn $ml={8}><MinusI /></ToolBtn>
            <ToolBtn $off $ml={15}><CheckI /></ToolBtn>
            <ToolBtn $off $ml={8}><CrossI /></ToolBtn>
            <Handle><HandleMark /></Handle>
          </Toolbar>
          <Split />
          <FormArea $mt={4} $mr={1}>
            <FormBody $pt={32} $pl={1}>
              <Row><Label>Метка</Label><Field $w={281}>3</Field></Row>
              <Row><Label>Название</Label><Field $w={281}>Комната 3</Field></Row>
              <Row $h={51}><Label>Название в интерфейсе</Label><Field $w={281} /></Row>
              <Row $h={160}>
                <Label $pt={0}>Инженерные объекты на 3D-мнемосхеме</Label>
                <SubTree>
                  <SubTreeRow $h={31} $pl={6}>
                    <CaretSvg kind="down" mr={20} />
                    <SunI />
                    <NodeText $bold $c="#e8961e" $ml={2}>Освещение (1)</NodeText>
                  </SubTreeRow>
                  <SubTreeRow $h={34} $pl={36}>
                    <CaretSvg kind="right" mr={18} />
                    <NodeText>Освещение недиммируемое</NodeText>
                  </SubTreeRow>
                </SubTree>
              </Row>
              <Row $h={40}>
                <span />
                <CountRow>
                  <ToolBtn $off><MinusI /></ToolBtn>
                  <CountText>Количество инженерных объектов</CountText>
                </CountRow>
              </Row>
            </FormBody>
            <VBar thumb={385} />
          </FormArea>
        </Panel>

        <Dots w={17} />

        <PanelFrame>
          <Panel $w={962}>
            <PanelHeader $ml={-7}>
              <EquipLogo />
              <Title $c="#b5a800" $gap={0}>Конечное оборудование</Title>
              <Hdr list steps filter="off" />
            </PanelHeader>
            <TreeBox>
              <TreeRow $h={33} $pl={5}>
                <CaretSvg kind="down" mr={24} />
                <NodeText $bold>Все оборудование (Количество: 5)</NodeText>
              </TreeRow>
              <TreeRow $h={32} $pl={36}>
                <CaretSvg kind="right" mr={18} />
                <ControlI />
                <NodeText $bold $c="#cf6aa5" $ml={3}>Контроль, управление и связь (Количество: 1)</NodeText>
              </TreeRow>
              <TreeRow $h={34} $pl={34}>
                <CaretSvg kind="down" mr={20} />
                <SunI />
                <NodeText $bold $c="#e8961e" $ml={3}>Освещение (Количество: 3)</NodeText>
              </TreeRow>
              <TreeRow $h={34} $pl={64}><CaretSvg kind="right" mr={19} /><NodeText>Зона освещения (Количество: 1)</NodeText></TreeRow>
              <TreeRow $h={31} $pl={64}><CaretSvg kind="right" mr={19} /><NodeText>Освещение диммируемое (Количество: 1)</NodeText></TreeRow>
              <TreeRow $h={32} $pl={62}><CaretSvg kind="down" mr={21} /><NodeText>Освещение недиммируемое (Количество: 1)</NodeText></TreeRow>
              <TreeRow $h={31} $pl={124}><NodeText>2</NodeText></TreeRow>
              <TreeRow $h={32} $pl={34}>
                <CaretSvg kind="down" mr={20} />
                <UniversalI />
                <NodeText $bold $c="#5e87a5" $ml={3}>Универсальные объекты (Количество: 1)</NodeText>
              </TreeRow>
              <TreeRow $h={34} $pl={62}><CaretSvg kind="down" mr={21} /><NodeText>Портал (Количество: 1)</NodeText></TreeRow>
              <TreeRow $h={30} $pl={117}><Pill $r={12} $hh={30} $px={7}><NodeText>8</NodeText></Pill></TreeRow>
            </TreeBox>
            <Toolbar $pl={4}>
              <ToolBtn><PlusI /></ToolBtn>
              <ToolBtn $ml={9}><MinusI /></ToolBtn>
              <ToolBtn $off $ml={16}><CheckI /></ToolBtn>
              <ToolBtn $off $ml={8}><CrossI /></ToolBtn>
              <ToolBtn $off $ml={15}><RotateCcw size={23} strokeWidth={2.5} /></ToolBtn>
              <ToolBtn $off $ml={8}><RotateCw size={23} strokeWidth={2.5} /></ToolBtn>
              <ToolBtn $w={42} $ml={16}><DropDiamondI /></ToolBtn>
              <ToolBtn $ml={15}><DropTrayI /></ToolBtn>
            </Toolbar>
            <Split />
            <FormArea $mt={4}>
              <FormBody $pt={32}>
                <Row><Label>Метка</Label><Field $w={281}>8</Field></Row>
                <Row><Label>Название</Label><Field $w={281} /></Row>
                <Row>
                  <Label>Тип</Label>
                  <TypeSelect>Портал<TinyChevron viewBox="0 0 12 12"><path d="M2 3l4 5 4-5" /></TinyChevron></TypeSelect>
                </Row>
                <Row $h={79.5}><Label>Метка локации</Label><Field $off $w={281} /></Row>
                <Row $h={83}><Label>Подпись в статус-баре</Label><Field $w={281} /></Row>
                <Row $h={93}>
                  <Label $pt={9}>Иконка в статус-баре</Label>
                  <IconSelect><DarkChevron viewBox="0 0 16 16"><path d="M3 5l5 6 5-6" /></DarkChevron></IconSelect>
                </Row>
                <Row><Label>Заголовок</Label><Field $w={281} $h={31} /></Row>
              </FormBody>
              <VBar thumb={206} />
            </FormArea>

            <ArrowMark viewBox="0 0 200 145">
              <path d="M197 75C175 66 155 62 136 63C100 66 62 82 33 110" fill="none" stroke="#ed1c24" strokeWidth="5" strokeLinecap="round" />
              <path d="M21 100L41 118 10 134z" fill="#ed1c24" />
            </ArrowMark>

            <Dropdown>
              <DropList>
                <DropSelected />
                <DropItem><Gear r={9.5} /></DropItem>
                <DropItem><HomeOut /></DropItem>
                <DropItem><HomeIn /></DropItem>
                <DropItem><Gear label="I" /></DropItem>
                <DropItem><Gear label="II" /></DropItem>
                <DropItem><Gear label="III" s={12} /></DropItem>
                <DropItem><Gear label="IV" s={12} /></DropItem>
                <DropItem><Gear label="V" /></DropItem>
                <DropItem><Case /></DropItem>
                <DropItem><Sun /></DropItem>
                <DropItem><Sunrise /></DropItem>
                <DropItem><Moon /></DropItem>
              </DropList>
              <DropScroll>
                <DropBtn $dir="u" /><DropThumb /><VSpace /><DropBtn $dir="d" />
              </DropScroll>
            </Dropdown>
          </Panel>
        </PanelFrame>
      </Workspace>
    </Page>
  );
}
